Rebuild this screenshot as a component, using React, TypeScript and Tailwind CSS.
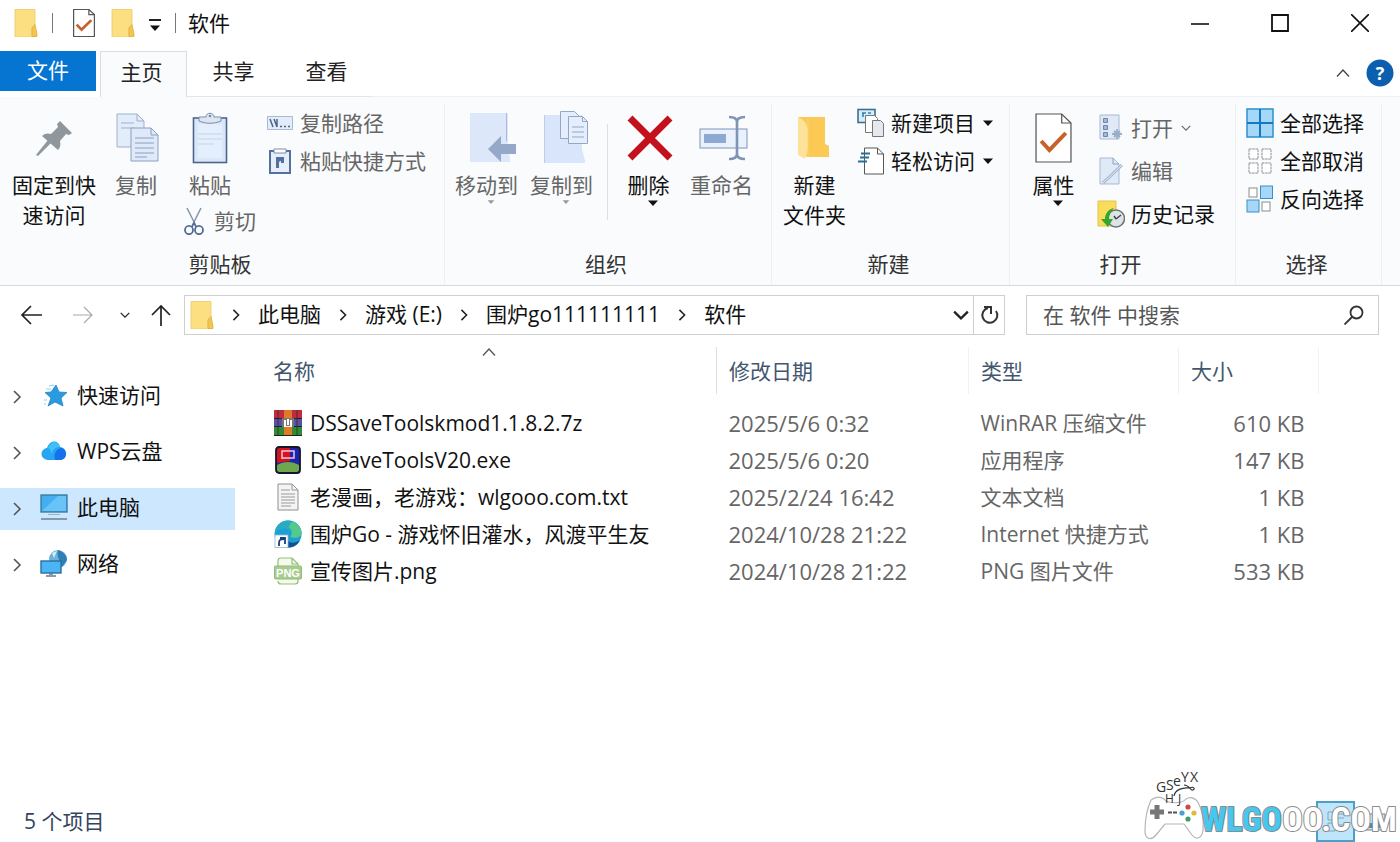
import type { ReactNode } from 'react';
import clsx from 'clsx';

/* ---------- icons ---------- */

function FolderIcon({ className = 'w-6 h-7' }: { className?: string }) {
  return (
    <svg viewBox="0 0 24 28" className={className} preserveAspectRatio="none" aria-hidden="true">
      <path d="M1 .5h20v15l2 9.5v3H1z" fill="#fbe08a" />
      <path d="M1 .5h20v15l-3 3V28H1z" fill="#fbdf80" stroke="#ecc96c" strokeWidth=".8" />
      <path d="M18 27.5V19l3-3.5 2 9.5v2.5z" fill="#f3c64f" stroke="#d9ab3c" strokeWidth=".7" />
    </svg>
  );
}

function CheckPageIcon({ className = 'w-[22px] h-[28px]', bold = false }: { className?: string; bold?: boolean }) {
  return (
    <svg viewBox="0 0 36 50" className={className} preserveAspectRatio="none" fill="none" aria-hidden="true">
      <path d="M1 1h25l9 9v39H1z" fill="#fff" stroke="#555" strokeWidth={bold ? 1.2 : 2} />
      <path d="M26 1v9h9" stroke="#555" strokeWidth={bold ? 1.2 : 2} />
      <path d="M6 28l8 9 16-17" stroke="#c8602a" strokeWidth={bold ? 4 : 4.5} />
    </svg>
  );
}

function PinIcon() {
  return (
    <svg width="38" height="38" viewBox="0 0 38 38" aria-hidden="true">
      <path d="M25 2l12 12-3 2-3-1-6 7c1 4 0 7-2 9L7 17c3-3 6-3 9-2l7-7-1-3z" fill="#8f979c" />
      <path d="M13 21l3 3L3 37l-2-1z" fill="#8f979c" />
    </svg>
  );
}

function CopyIcon() {
  return (
    <svg width="44" height="50" viewBox="0 0 44 50" fill="none" className="ml-1" aria-hidden="true">
      <path d="M1 1h20l7 7v26H1z" fill="#e3ecfa" stroke="#9fb0cb" />
      <path d="M21 1v7h7M5 10h13M5 15h13" stroke="#9fb0cb" />
      <path d="M15 15h20l7 7v26H15z" fill="#dfe9f9" stroke="#8ba0c2" />
      <path d="M35 15v7h7M19 25h19M19 30h19M19 35h19M19 40h19M19 44h12" stroke="#8ba0c2" />
    </svg>
  );
}

function PasteIcon() {
  return (
    <svg width="36" height="52" viewBox="0 0 36 52" fill="none" aria-hidden="true">
      <rect x="1.5" y="6" width="33" height="44.5" fill="#d9e7fa" stroke="#4f6587" strokeWidth="1.6" />
      <path d="M6 12h24v34H6z" fill="#e4eefc" />
      <path d="M6 22h24M6 27h24M6 32h16" stroke="#c4d4ea" />
      <path d="M7 5h7c0-5 8-5 8 0h7v4c-7 3-15 3-22 0z" fill="#dce5f1" stroke="#7a8dab" />
      <circle cx="18" cy="4" r="1.3" fill="#7a8dab" />
    </svg>
  );
}

function ScissorsIcon() {
  return (
    <svg width="20" height="28" viewBox="0 0 20 28" fill="none" aria-hidden="true">
      <path d="M3 1l9 18M17 1L8 19" stroke="#8793a8" strokeWidth="1.5" />
      <ellipse cx="5" cy="23" rx="4" ry="4.2" stroke="#536c97" strokeWidth="1.8" />
      <ellipse cx="15" cy="23" rx="4" ry="4.2" stroke="#536c97" strokeWidth="1.8" />
      <path d="M8 20l2-4 2 4" stroke="#536c97" strokeWidth="1.6" />
    </svg>
  );
}

function CopyPathIcon() {
  return (
    <svg width="26" height="16" viewBox="0 0 26 16" fill="none" aria-hidden="true">
      <path d="M.5 1.500h25v13H.5z" fill="#e2ecfa" stroke="#a9b9d2" />
      <path d="M3 4l3 8M7 4l3 8M10 4v8" stroke="#4c638a" strokeWidth="1.5" />
      <path d="M13 11.500h2M17 11.500h2M21 11.500h2" stroke="#4c638a" strokeWidth="1.5" />
    </svg>
  );
}

function PasteShortcutIcon() {
  return (
    <svg width="22" height="26" viewBox="0 0 22 26" fill="none" aria-hidden="true">
      <rect x="1" y="3" width="20" height="22" fill="#e6eefb" stroke="#55709b" strokeWidth="2" />
      <path d="M5 1h12v4H5z" fill="#fff" stroke="#7b8fae" />
      <path d="M7 9h8v6h-3v-2c-2 0-2 1-2 3v4H7z" fill="#55709b" />
    </svg>
  );
}

function MoveToIcon() {
  return (
    <svg width="48" height="52" viewBox="0 0 48 52" fill="none" className="ml-3" aria-hidden="true">
      <path d="M1 1h38v34l2 12v3H1z" fill="#dce7fa" />
      <path d="M37.500 1v28" stroke="#a9bcdc" />
      <path d="M19 37l13-13v8h15v10H32v8z" fill="#95a8c9" />
    </svg>
  );
}

function CopyToIcon() {
  return (
    <svg width="46" height="56" viewBox="0 0 46 56" fill="none" className="ml-2" aria-hidden="true">
      <path d="M1 5h38v34l3 12v2H1z" fill="#d9e5fa" />
      <path d="M1.500 5v48" stroke="#bccde8" />
      <path d="M17.500 1.500h14l5 5v22h-19z" fill="#e5eefc" stroke="#94a7c7" />
      <path d="M25.500 6.500h14l5 5v22h-19z" fill="#e5eefc" stroke="#94a7c7" />
      <path d="M39.500 6.500v5h5M29 17h12M29 22h12M29 27h12" stroke="#94a7c7" />
    </svg>
  );
}

function DeleteIcon() {
  return (
    <svg width="46" height="46" viewBox="0 0 46 46" className="ml-0.5" aria-hidden="true">
      <path d="M3 3l40 40M43 3L3 43" stroke="#c4121c" strokeWidth="7" />
    </svg>
  );
}

function RenameIcon() {
  return (
    <svg width="50" height="46" viewBox="0 0 50 46" fill="none" className="ml-1" aria-hidden="true">
      <rect x="1" y="14" width="47" height="19" fill="#e9f1fd" stroke="#7d95bd" />
      <rect x="5" y="19" width="22" height="9" fill="#8da8d2" />
      <path d="M30 2c5 0 8 1 8 5v32c0 4-3 5-8 5M46 2c-5 0-8 1-8 5v32c0 4 3 5 8 5" stroke="#7f93b5" strokeWidth="2.600" />
    </svg>
  );
}

function NewFolderIcon() {
  return (
    <svg width="34" height="46" viewBox="0 0 34 46" aria-hidden="true">
      <path d="M0 2h27v27l4 2v11H8z" fill="#fcc954" />
      <path d="M0 2c7 3 10 8 10 16v14c0 6-3 9-3 12l-7-4z" fill="#fde29a" />
      <path d="M10 4v38" stroke="#fbd677" />
    </svg>
  );
}

function NewItemIcon() {
  return (
    <svg width="28" height="30" viewBox="0 0 28 30" fill="none" aria-hidden="true">
      <rect x="1" y="1.500" width="17" height="13" fill="#d9edf9" stroke="#3a7292" strokeWidth="1.600" />
      <path d="M5 5h4M6 9v-4M11 5h3" stroke="#2c84b5" strokeWidth="1.600" />
      <path d="M8.500 7.500h9l3 3v14h-12z" fill="#fff" stroke="#777" />
      <path d="M15.500 12.500h8l3 3v13h-11z" fill="#e6e8ee" stroke="#777" />
    </svg>
  );
}

function EasyAccessIcon() {
  return (
    <svg width="26" height="28" viewBox="0 0 26 28" fill="none" aria-hidden="true">
      <path d="M6.500 1h13l6 6v20h-19z" fill="#fff" stroke="#555" />
      <path d="M19.500 1v6h6" stroke="#555" />
      <path d="M3 6.500h9M2 10.500h9M0 14.500h9" stroke="#2b6f98" strokeWidth="2" />
    </svg>
  );
}

function OpenIcon() {
  return (
    <svg width="26" height="28" viewBox="0 0 26 28" fill="none" aria-hidden="true">
      <path d="M2 1h19v24H2z" fill="#dfe9f8" stroke="#a9b9d2" />
      <path d="M5.500 4.500h4v4h-4zM5.500 11.500h4v4h-4zM5.500 18.500h4v4h-4z" fill="#a7b8d3" stroke="#6f86ab" />
      <path d="M19 15v10M14 20h10M16 17l6 6M22 17l-6 6" stroke="#9aacc9" strokeWidth="1.800" />
    </svg>
  );
}

function EditIcon() {
  return (
    <svg width="26" height="28" viewBox="0 0 26 28" fill="none" aria-hidden="true">
      <path d="M2 1h13l6 6v20H2z" fill="#dfe9f8" stroke="#a9b9d2" />
      <path d="M15 1v6h6" stroke="#8da0c0" />
      <path d="M5 26L24 8" stroke="#a3b4cf" strokeWidth="3" />
      <path d="M5 26L24 8" stroke="#eaf1fb" />
    </svg>
  );
}

function HistoryIcon() {
  return (
    <svg width="28" height="28" viewBox="0 0 28 28" fill="none" aria-hidden="true">
      <path d="M1 1h18v14l2 9v2H1z" fill="#f9dc5c" stroke="#e5c348" />
      <circle cx="19" cy="18.500" r="8.500" fill="#dde3e6" stroke="#6d7478" strokeWidth="1.500" />
      <path d="M19 19l5-4M19 19l-2-3" stroke="#3c4245" strokeWidth="1.400" />
      <path d="M17 8c-5 1-9 5-9 11H4l7 8 5-8h-4c0-4 2-8 5-11z" fill="#34a52d" />
    </svg>
  );
}

function SelectAllIcon() {
  return (
    <svg width="28" height="30" viewBox="0 0 28 30" aria-hidden="true">
      <rect x="1" y="1" width="26" height="28" fill="#a5d8f8" stroke="#2f8fcb" strokeWidth="1.500" />
      <path d="M14 1v28M1 15h26" stroke="#1579bd" strokeWidth="2" />
    </svg>
  );
}

function SelectNoneIcon() {
  return (
    <svg width="28" height="28" viewBox="0 0 28 28" fill="#fff" stroke="#8b8b8b" strokeDasharray="2.500 .7" aria-hidden="true">
      <rect x="3" y="2" width="9" height="10" />
      <rect x="16" y="2" width="9" height="10" />
      <rect x="3" y="16" width="9" height="10" />
      <rect x="16" y="16" width="9" height="10" />
    </svg>
  );
}

function InvertIcon() {
  return (
    <svg width="28" height="28" viewBox="0 0 28 28" fill="#fff" stroke="#8b8b8b" aria-hidden="true">
      <rect x="3" y="3" width="8" height="9" />
      <rect x="14.500" y="1" width="12" height="12.500" fill="#a5d8f8" stroke="#3e8fc2" />
      <rect x="1" y="15" width="12" height="12" fill="#a5d8f8" stroke="#3e8fc2" />
      <rect x="16" y="17" width="8" height="9" />
    </svg>
  );
}

function Chevron({ dir, className = 'size-3.5', width = 1.6 }: { dir: 'up' | 'down' | 'right'; className?: string; width?: number }) {
  const d = { up: 'M1 10.500l6-6.500 6 6.500', down: 'M1 4l6 6 6-6', right: 'M4 1l6 6-6 6' }[dir];
  return (
    <svg viewBox="0 0 14 14" className={className} fill="none" stroke="currentColor" strokeWidth={width} aria-hidden="true">
      <path d={d} />
    </svg>
  );
}

function Caret({ className = 'w-2.5 h-1.5' }: { className?: string }) {
  return (
    <svg viewBox="0 0 10 6" className={className} fill="currentColor" aria-hidden="true">
      <path d="M0 .5h10L5 6z" />
    </svg>
  );
}

function Arrow({ dir }: { dir: 'left' | 'right' | 'up' }) {
  const d = {
    left: 'M22 11H2M11 2l-9 9 9 9',
    right: 'M1 11h19M12 3l8 8-8 8',
    up: 'M11 22V2M2 11l9-9 9 9',
  }[dir];
  return (
    <svg width="22" height="22" viewBox="0 0 22 22" fill="none" stroke="currentColor" strokeWidth={dir === 'right' ? 1.2 : 1.7} aria-hidden="true">
      <path d={d} />
    </svg>
  );
}

/* sidebar */

function StarIcon() {
  return (
    <svg width="28" height="24" viewBox="0 0 28 24" aria-hidden="true">
      <path d="M16 2l3 7 8 .5-6 5.500 2 8-8-4-7 4 3-8-6-5.500 6-.5z" fill="#2b9be0" stroke="#2284c6" strokeWidth=".8" />
      <path d="M9 3l5-1M6 6h5M4 17h3M4 21h2" stroke="#8fcdf0" strokeWidth="1.200" />
    </svg>
  );
}

function CloudIcon() {
  return (
    <svg width="28" height="22" viewBox="0 0 28 22" aria-hidden="true">
      <path d="M8 20c-9-1-8-11-1-12C10-1 19 0 20 7c8 1 8 12 0 13z" fill="#27a5f3" />
      <path d="M15 20c-2-7 2-12 7-12 6 3 5 11-1 12z" fill="#1671ec" />
      <path d="M8 8c3-8 11-7 12-1-5 0-8 3-8 8-1-4-2-6-4-7z" fill="#3fc1f5" />
    </svg>
  );
}

function PcIcon() {
  return (
    <svg width="28" height="26" viewBox="0 0 28 26" aria-hidden="true">
      <rect x="1" y="1" width="26" height="17" fill="#45aef0" stroke="#35779f" strokeWidth="1.300" />
      <path d="M2 17L18 2h8v15z" fill="#69c3f7" />
      <path d="M8 20.500h12" stroke="#9fb0bd" />
      <path d="M1 25h26" stroke="#64798a" strokeWidth="1.400" />
    </svg>
  );
}

function NetworkIcon() {
  return (
    <svg width="28" height="28" viewBox="0 0 28 28" aria-hidden="true">
      <circle cx="18" cy="10" r="9" fill="#6eb3dc" />
      <path d="M18 1c7 2 9 7 9 10l-5 7c-1-6-6-9-4-17z" fill="#2f7fb5" />
      <path d="M12 4l5-2-3 7z" fill="#d3edf9" />
      <rect x="1" y="12" width="20" height="12" fill="#4bb4f4" stroke="#2a6f9f" strokeWidth="1.400" />
      <path d="M6 27h10M9 25h4" stroke="#5f7d92" strokeWidth="1.500" />
    </svg>
  );
}

/* files */

function RarIcon() {
  return (
    <svg width="28" height="26" viewBox="0 0 28 26" aria-hidden="true">
      <path d="M0 0h28v8H0z" fill="#c02c3d" />
      <path d="M0 9h28v7H0z" fill="#5b4ea6" />
      <path d="M0 17h28v9H0z" fill="#2f8a36" />
      <path d="M0 8.500h28M0 16.500h28" stroke="#222" />
      <path d="M4 0v26M23 0v26" stroke="#2b2b2b" strokeWidth=".8" />
      <path d="M10 0h8v26h-8z" fill="#df7a25" />
      <path d="M8 8h12v9H8z" fill="#777" />
      <path d="M10 10h2v6h4v-6h2v7h-8z" fill="#fff" />
      <path d="M13 9h2v6h-2z" fill="#fff" />
      <path d="M0 25.500h28" stroke="#222" />
    </svg>
  );
}

function ExeIcon() {
  return (
    <svg width="26" height="28" viewBox="0 0 26 28" aria-hidden="true">
      <rect x="1" y="1" width="24" height="26" rx="3" fill="#1a24b0" />
      <path d="M2 4c0-1 1-2 2-2h11v13l-13 2z" fill="#d3131d" />
      <path d="M2 19c7-4 15-4 22 0v5c0 1-1 2-2 2H4c-1 0-2-1-2-2z" fill="#6ca84c" />
      <path d="M7 13V5h12v7H7" fill="none" stroke="#f6c3d4" strokeWidth="1.500" />
      <rect x="1" y="1" width="24" height="26" rx="3" fill="none" stroke="#15182b" strokeWidth="1.800" />
    </svg>
  );
}

function TxtIcon() {
  return (
    <svg width="24" height="28" viewBox="0 0 24 28" fill="none" aria-hidden="true">
      <path d="M2 1h14l6 6v20H2z" fill="#f4f4f4" stroke="#8e8e8e" />
      <path d="M16 1v6h6M5 7h9M5 11h14M5 14h14M5 17h14M5 20h14M5 23h10" stroke="#9a9a9a" />
    </svg>
  );
}

function EdgeLinkIcon() {
  return (
    <svg width="28" height="28" viewBox="0 0 28 28" aria-hidden="true">
      <circle cx="14" cy="14" r="13.500" fill="#1c9fd4" />
      <path d="M14 .5c9 0 14 7 13.500 13 0 5-8 6-11 3 2-4-1-8-6-8C5 9 2 11 1 14 1 6 7 .5 14 .5z" fill="#2aacbf" />
      <path d="M18 1.500c7 2 10 8 9.500 12-1 5-9 5-11 3 3-4 1-8-2-9z" fill="#55c98c" />
      <path d="M12 18c3 6 9 6 14 2-2 5-7 8-13 7.500z" fill="#134f93" />
      <rect x="1" y="15" width="13" height="12.500" fill="#fff" stroke="#8fb4cc" strokeWidth=".8" />
      <path d="M5 26v-3c0-3 1-4 5-4M6 18h5v6" stroke="#153f78" strokeWidth="1.800" fill="none" />
    </svg>
  );
}

function PngIcon() {
  return (
    <svg width="28" height="28" viewBox="0 0 28 28" aria-hidden="true">
      <path d="M4 9V4c0-2 1-3 3-3h11l6 6v17c0 2-1 3-3 3H7c-2 0-3-1-3-3" fill="#f4faee" stroke="#93bd75" strokeWidth="1.200" />
      <path d="M18 1v6h6" fill="none" stroke="#93bd75" strokeWidth="1.200" />
      <rect x=".5" y="9" width="27" height="13" rx="1" fill="#a9cc92" stroke="#93bd75" />
      <text x="14" y="19.500" textAnchor="middle" fontSize="11" fontWeight="700" fill="#fff" className="font-['Liberation_Sans',sans-serif]">
        PNG
      </text>
    </svg>
  );
}

/* ---------- ribbon parts ---------- */

function BigButton({ icon, lines, muted, caret, className }: { icon: ReactNode; lines: string[]; muted?: boolean; caret?: boolean; className: string }) {
  return (
    <button className={clsx('flex flex-col items-center pt-1', muted ? 'text-[#666]' : 'text-[#111]', className)}>
      <span className="flex h-[60px] items-center justify-center">{icon}</span>
      <span className="mt-0.5 whitespace-nowrap leading-[30px]">
        {lines.map((line) => (
          <span key={line} className="block">
            {line}
          </span>
        ))}
      </span>
      {caret && <Caret className={clsx('ml-2', muted ? 'h-1 w-2 text-[#999]' : 'h-1.5 w-2.5')} />}
    </button>
  );
}

function SmallButton({ icon, label, muted, className = 'h-[38px]', children }: { icon: ReactNode; label: string; muted?: boolean; className?: string; children?: ReactNode }) {
  return (
    <button className={clsx('flex items-center whitespace-nowrap', muted ? 'text-[#666]' : 'text-[#111]', className)}>
      <span className="mr-1.5 flex w-7 justify-center">{icon}</span>
      {label}
      {children}
    </button>
  );
}

function Group({ label, className, children }: { label: string; className: string; children: ReactNode }) {
  return (
    <section className={clsx('flex shrink-0 flex-col border-r border-[#eceff3] pb-[7px]', className)}>
      <div className="flex h-[146px] items-start">{children}</div>
      <div className="pr-1 text-center leading-7 text-[#333]">{label}</div>
    </section>
  );
}

function Ribbon() {
  return (
    <div className="flex border-b border-[#d5d9de] bg-[#f9fbfd] pt-[7px]">
      <Group label="剪贴板" className="w-[445px]">
        <BigButton icon={<PinIcon />} lines={['固定到快', '速访问']} className="w-[108px]" />
        <BigButton icon={<CopyIcon />} lines={['复制']} muted className="w-14" />
        <div className="ml-4 flex flex-col">
          <BigButton icon={<PasteIcon />} lines={['粘贴']} muted className="w-[60px]" />
          <SmallButton icon={<ScissorsIcon />} label="剪切" muted className="mt-1.5 h-[30px]" />
        </div>
        <div className="ml-2.5 flex flex-col">
          <SmallButton icon={<CopyPathIcon />} label="复制路径" muted />
          <SmallButton icon={<PasteShortcutIcon />} label="粘贴快捷方式" muted />
        </div>
      </Group>

      <Group label="组织" className="w-[327px]">
        <BigButton icon={<MoveToIcon />} lines={['移动到']} muted caret className="ml-1 w-[75px]" />
        <BigButton icon={<CopyToIcon />} lines={['复制到']} muted caret className="w-[75px]" />
        <div className="ml-2 mt-5 h-24 border-l border-[#dcdfe3]" />
        <BigButton icon={<DeleteIcon />} lines={['删除']} caret className="ml-1 w-[73px]" />
        <BigButton icon={<RenameIcon />} lines={['重命名']} muted className="w-[73px]" />
      </Group>

      <Group label="新建" className="w-[238px]">
        <BigButton icon={<NewFolderIcon />} lines={['新建', '文件夹']} className="w-[85px]" />
        <div className="flex flex-col">
          <SmallButton icon={<NewItemIcon />} label="新建项目">
            <Caret className="ml-2 h-1.5 w-2.5" />
          </SmallButton>
          <SmallButton icon={<EasyAccessIcon />} label="轻松访问">
            <Caret className="ml-2 h-1.5 w-2.5" />
          </SmallButton>
        </div>
      </Group>

      <Group label="打开" className="w-[226px]">
        <BigButton icon={<CheckPageIcon className="h-[50px] w-[37px]" bold />} lines={['属性']} caret className="w-[87px]" />
        <div className="mt-0.5 flex flex-col">
          <SmallButton icon={<OpenIcon />} label="打开" muted className="h-[43px]">
            <Chevron dir="down" className="ml-2 size-2.5" />
          </SmallButton>
          <SmallButton icon={<EditIcon />} label="编辑" muted className="h-[43px]" />
          <SmallButton icon={<HistoryIcon />} label="历史记录" className="h-[43px]" />
        </div>
      </Group>

      <Group label="选择" className="w-[146px]">
        <div className="ml-2.5 flex flex-col">
          <SmallButton icon={<SelectAllIcon />} label="全部选择" />
          <SmallButton icon={<SelectNoneIcon />} label="全部取消" />
          <SmallButton icon={<InvertIcon />} label="反向选择" />
        </div>
      </Group>
    </div>
  );
}

/* ---------- window chrome ---------- */

function TitleBar() {
  return (
    <header className="flex h-[50px] items-center pb-[5px] pl-3.5 text-[#111]">
      <FolderIcon />
      <span className="ml-3.5 h-5 border-l border-[#777]" />
      <button aria-label="属性" className="ml-5">
        <CheckPageIcon />
      </button>
      <button aria-label="新建文件夹" className="ml-4">
        <FolderIcon />
      </button>
      <button aria-label="自定义快速访问工具栏" className="mt-1 ml-3.5 flex flex-col items-center gap-1">
        <span className="block w-3 border-t-2 border-[#222]" />
        <Caret />
      </button>
      <span className="ml-3.5 h-5 border-l border-[#777]" />
      <h1 className="ml-3">软件</h1>
      <div className="ml-auto flex">
        <button aria-label="最小化" className="flex h-[44px] w-20 items-center justify-center">
          <svg width="18" height="18" viewBox="0 0 18 18" stroke="#111" strokeWidth="1.600"><path d="M0 10h18" /></svg>
        </button>
        <button aria-label="最大化" className="flex h-[44px] w-20 items-center justify-center">
          <svg width="18" height="18" viewBox="0 0 18 18" fill="none" stroke="#111" strokeWidth="1.800"><path d="M1 1h16v16H1z" /></svg>
        </button>
        <button aria-label="关闭" className="flex h-[44px] w-20 items-center justify-center">
          <svg width="18" height="18" viewBox="0 0 18 18" stroke="#111" strokeWidth="1.600"><path d="M0 0l18 18M18 0L0 18" /></svg>
        </button>
      </div>
    </header>
  );
}

function Tabs() {
  return (
    <nav className="flex h-[47px] items-start pt-px text-[#222]">
      <button className="h-10 w-24 bg-[#0575d1] pb-0.5 text-white">文件</button>
      <button className="ml-1 h-[46px] w-[87px] border border-b-0 border-[#d9dde2] bg-[#f9fbfd] pr-1 pb-1.5">主页</button>
      <button className="h-[46px] w-[93px] border-b border-[#e3e6ea] pb-1.5">共享</button>
      <button className="h-[46px] w-[93px] border-b border-[#e3e6ea] pb-1.5">查看</button>
      <div className="flex h-[46px] grow items-center justify-end border-b border-[#eef0f3] pr-1.5 pb-0.5">
        <button aria-label="折叠功能区" className="text-[#444]">
          <Chevron dir="up" width={1.3} />
        </button>
        <button aria-label="帮助" className="ml-4">
          <svg width="28" height="28" viewBox="0 0 28 28" aria-hidden="true">
            <circle cx="14" cy="14" r="13.500" fill="#0b5fae" />
            <text x="14" y="20.500" textAnchor="middle" fontSize="18" fontWeight="700" fill="#fff">?</text>
          </svg>
        </button>
      </div>
    </nav>
  );
}

function AddressBar() {
  const crumbs = ['此电脑', '游戏 (E:)', '围炉go111111111', '软件'];
  return (
    <div className="flex items-center pt-[9px] pr-[21px] pl-5 text-[#222]">
      <button aria-label="后退"><Arrow dir="left" /></button>
      <button aria-label="前进" className="ml-[30px] text-[#aaa]"><Arrow dir="right" /></button>
      <button aria-label="最近浏览的位置" className="ml-[26px]"><Chevron dir="down" className="size-2.5" width={1.8} /></button>
      <button aria-label="上移" className="ml-5"><Arrow dir="up" /></button>
      <div className="ml-3 flex h-10 grow items-center border border-[#cfcfcf] pl-[5px]">
        <FolderIcon />
        {crumbs.map((crumb) => (
          <span key={crumb} className="flex items-center">
            <Chevron dir="right" className="mx-4 size-3" width={1.8} />
            <a href="#" className="pb-0.5 text-[#111]">{crumb}</a>
          </span>
        ))}
        <button aria-label="以前的位置" className="ml-auto px-1"><Chevron dir="down" className="size-4" width={2} /></button>
        <button aria-label="刷新" className="flex h-full w-[31px] items-center justify-center border-l border-[#cfcfcf]">
          <svg width="20" height="22" viewBox="0 0 20 22" fill="none" stroke="#333" strokeWidth="2" aria-hidden="true">
            <path d="M17 7a7.500 7.500 0 1 1-8-3M5 3h7v7" />
          </svg>
        </button>
      </div>
      <div className="ml-[21px] flex h-10 w-[353px] items-center border border-[#cfcfcf] pr-3.5 pl-4">
        <input
          type="search"
          aria-label="搜索"
          placeholder="在 软件 中搜索"
          className="min-w-0 grow bg-transparent outline-none placeholder:text-[#555]"
        />
        <svg width="20" height="20" viewBox="0 0 20 20" fill="none" stroke="#333" strokeWidth="1.800" aria-hidden="true">
          <circle cx="12.500" cy="7.500" r="6" />
          <path d="M8 12l-7.500 7.500" />
        </svg>
      </div>
    </div>
  );
}

const places = [
  { name: '快速访问', icon: <StarIcon /> },
  { name: 'WPS云盘', icon: <CloudIcon /> },
  { name: '此电脑', icon: <PcIcon />, selected: true },
  { name: '网络', icon: <NetworkIcon /> },
];

function Sidebar() {
  return (
    <aside className="flex w-[235px] shrink-0 flex-col gap-3.5 pt-[41px]">
      {places.map((place) => (
        <button
          key={place.name}
          className={clsx('flex h-[42px] items-center pb-1 pl-2.5 text-[#111]', place.selected && 'bg-[#cce7fe]')}
        >
          <Chevron dir="right" className="mt-1 size-3.5 text-[#555]" />
          <span className="mx-2 flex w-[37px] justify-end pr-px">{place.icon}</span>
          {place.name}
        </button>
      ))}
    </aside>
  );
}

const files = [
  { icon: <RarIcon />, name: 'DSSaveToolskmod1.1.8.2.7z', date: '2025/5/6 0:32', type: 'WinRAR 压缩文件', size: '610 KB' },
  { icon: <ExeIcon />, name: 'DSSaveToolsV20.exe', date: '2025/5/6 0:20', type: '应用程序', size: '147 KB' },
  { icon: <TxtIcon />, name: '老漫画，老游戏：wlgooo.com.txt', date: '2025/2/24 16:42', type: '文本文档', size: '1 KB' },
  { icon: <EdgeLinkIcon />, name: '围炉Go - 游戏怀旧灌水，风渡平生友', date: '2024/10/28 21:22', type: 'Internet 快捷方式', size: '1 KB' },
  { icon: <PngIcon />, name: '宣传图片.png', date: '2024/10/28 21:22', type: 'PNG 图片文件', size: '533 KB' },
];

function FileTable() {
  return (
    <main className="grow pt-3 pr-[81px] pl-[26px]">
      <table className="w-full table-fixed text-left">
        <colgroup>
          <col />
          <col className="w-[252px]" />
          <col className="w-[210px]" />
          <col className="w-[140px]" />
        </colgroup>
        <thead>
          <tr className="h-[47px] text-[#43566f]">
            <th className="relative border-r border-[#dcdfe3] pl-3 font-normal">
              名称
              <Chevron dir="up" className="absolute -top-0.5 left-1/2 size-3.5 -translate-x-1/2 text-[#555]" width={1.3} />
            </th>
            <th className="border-r border-[#f0f2f4] pl-3 font-normal">修改日期</th>
            <th className="border-r border-[#f0f2f4] pl-3 font-normal">类型</th>
            <th className="border-r border-[#f0f2f4] pl-3 font-normal">大小</th>
          </tr>
        </thead>
        <tbody className="text-[#666]">
          <tr className="h-2.5" aria-hidden="true" />
          {files.map((file) => (
            <tr key={file.name} className="h-[37px] whitespace-nowrap">
              <td className="pl-3 text-[#111]">
                <span className="flex items-center">
                  <span className="mr-2 flex w-[29px] justify-center">{file.icon}</span>
                  {file.name}
                </span>
              </td>
              <td className="pl-3 text-[22px]">{file.date}</td>
              <td className="pl-3">{file.type}</td>
              <td className="pr-3.5 text-right text-[22px]">{file.size}</td>
            </tr>
          ))}
        </tbody>
      </table>
    </main>
  );
}

function StatusBar() {
  return (
    <footer className="flex h-[41px] items-center pr-[13px] text-[#33455e]">
      <span className="pb-0.5 pl-6">5 个项目</span>
      <button aria-label="详细信息" className="ml-auto flex h-full w-[39px] items-center justify-center border-2 border-[#4d9fc6] bg-[#bfe5fa]">
        <svg width="18" height="24" viewBox="0 0 18 24" fill="none" stroke="#7fa6bb" aria-hidden="true">
          <path d="M1 2h7v8H1zM1 13h7v8H1zM11 4h6M11 8h6M11 15h6M11 19h6" />
        </svg>
      </button>
      <button aria-label="大图标" className="ml-2 flex w-6 justify-center">
        <svg width="22" height="18" viewBox="0 0 22 18" aria-hidden="true">
          <path d="M1 1h20v16H1z" fill="#d6e6f2" stroke="#6e8394" />
          <path d="M3 10h16v5H3z" fill="#4a86b4" />
        </svg>
      </button>
    </footer>
  );
}

function Watermark() {
  return (
    <svg width="256" height="82" viewBox="0 -8 256 82" fill="none" className="pointer-events-none absolute right-0 bottom-0 overflow-visible" role="img" aria-label="WLGOOO.COM">
      <path d="M7 32c4-3 9-4 13-1 3 5 18 5 22 0 4-3 9-1 12 3 4 8 6 18 5 28-1 9-7 10-11 5l-8-11H21l-9 11C7 73 1 71 1 63c0-11 2-22 6-31z" fill="#fff" stroke="#b5b5b5" strokeWidth="1.200" />
      <path d="M6 41.500h4.500V37h5v4.500H20v5h-4.500V51h-5v-4.500H6z" fill="#777" />
      <path d="M24 44.500h4M29 44.500h4" stroke="#555" strokeWidth="1.800" />
      <circle cx="38" cy="45" r="2.600" fill="#4c9fd0" />
      <circle cx="44" cy="39" r="2.600" fill="#c84a4a" />
      <circle cx="50" cy="45" r="2.600" fill="#dfb943" />
      <circle cx="44" cy="51" r="2.600" fill="#3f9d68" />
      <path d="M40 17c6 0 6 6 9 5s0-4-3-2c-8-1-15 2-16 8" stroke="#333" strokeWidth="1.200" />
      <g fill="#333" fontSize="14" className="font-['Open_Sans',sans-serif]">
        <text x="12" y="24">G</text>
        <text x="22" y="22">S</text>
        <text x="29" y="18">e</text>
        <text x="37" y="14">Y</text>
        <text x="46" y="14">X</text>
        <text x="21" y="35" fontSize="12">H</text>
        <text x="34" y="35" fontSize="12">J</text>
      </g>
      <text
        x="57"
        y="63"
        fontSize="34"
        fontWeight="700"
        stroke="#8a8a8a"
        strokeWidth="2"
        strokeLinejoin="round"
        fill="#fff"
        paintOrder="stroke"
        className="font-['Liberation_Sans_Narrow','Roboto_Condensed',sans-serif]"
      >
        <tspan fill="#45c8f0">WLGO</tspan>OO.COM
      </text>
    </svg>
  );
}

export default function App() {
  return (
    <div className="relative flex min-h-screen flex-col bg-white font-['Open_Sans','Noto_Sans_CJK_SC',sans-serif] text-[21px] leading-7">
      <TitleBar />
      <Tabs />
      <Ribbon />
      <AddressBar />
      <div className="flex grow">
        <Sidebar />
        <FileTable />
      </div>
      <StatusBar />
      <Watermark />
    </div>
  );
}
